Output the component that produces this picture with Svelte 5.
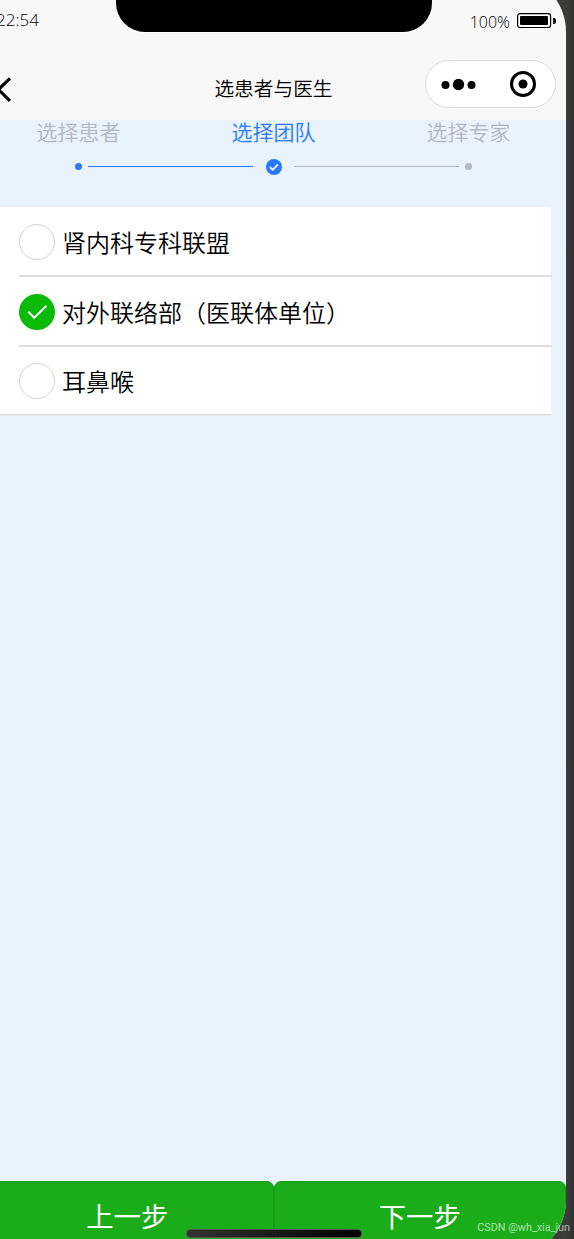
<script>
	const steps = ['选择患者', '选择团队', '选择专家'];
	const active = 1;

	const teams = [
	  { id: 1, name: '肾内科专科联盟' },
	  { id: 2, name: '对外联络部（医联体单位）' },
	  { id: 3, name: '耳鼻喉' },
	];
	let selected = $state(2);
</script>

<main>
	<div class="phone">
		<header>
			<div class="notch"></div>
			<div class="status">
				<span class="time">22:54</span>
				<span class="power">100%</span>
				<svg class="battery" width="40" height="16" viewBox="0 0 40 16">
					<rect x="0.6" y="0.7" width="33" height="13.8" rx="2.5" fill="#fff" stroke="#000" stroke-width="1.2" />
					<rect x="3" y="3" width="28" height="9" rx="1" />
					<path d="M36 5h1q2 0 2 3t-2 3h-1z" />
				</svg>
			</div>
			<div class="navbar">
				<svg class="back" width="16" height="28" viewBox="0 0 16 28">
					<path d="M13 2.4 1.4 13.6l11.6 11.2" fill="none" stroke="#000" stroke-width="3.2" />
				</svg>
				<h1>选患者与医生</h1>
				<div class="capsule">
					<svg width="129" height="46" viewBox="0 0 129 46">
						<circle cx="19.5" cy="24" r="4" />
						<circle cx="32.5" cy="23.5" r="5.7" />
						<circle cx="45.5" cy="24" r="4" />
						<circle cx="97" cy="23" r="11.5" fill="none" stroke="#000" stroke-width="3" />
						<circle cx="97" cy="23" r="4.5" />
					</svg>
				</div>
			</div>
		</header>

		<div class="steps">
			{#each steps as step, i}
				<div class="step" class:current={i === active} class:done={i < active}>
					<span>{step}</span>
					<div class="track">
						<i class:hidden={i === 0} class:blue={i <= active}></i>
						{#if i === active}
							<svg width="16" height="16" viewBox="0 0 16 16">
								<circle cx="8" cy="8" r="8" fill="#2979ff" />
								<path d="M3.9 8.2 6.7 10.8 12 5.3" fill="none" stroke="#fff" stroke-width="1.7" />
							</svg>
						{:else}
							<b></b>
						{/if}
						<i class:hidden={i === steps.length - 1} class:blue={i < active}></i>
					</div>
				</div>
			{/each}
		</div>

		<div class="list">
			{#each teams as team (team.id)}
				<label>
					<input type="radio" name="team" value={team.id} bind:group={selected} />
					<svg width="36" height="36" viewBox="0 0 36 36">
						{#if selected === team.id}
							<circle cx="18" cy="18" r="18" fill="#09bb07" />
							<path d="M9.3 17.8 15.2 23.8 27.5 11.7" fill="none" stroke="#fff" stroke-width="2" />
						{:else}
							<circle cx="18" cy="18" r="17.5" fill="#fff" stroke="#d1d1d1" />
						{/if}
					</svg>
					<span>{team.name}</span>
				</label>
			{/each}
		</div>

		<footer>
			<button>上一步</button>
			<button>下一步</button>
			<div class="home"></div>
		</footer>
	</div>
	<div class="mark">CSDN @wh_xia_jun</div>
</main>

<style>
	:global(body) {
	  margin: 0;
	  overflow: hidden;
	}

	main {
	  position: relative;
	  width: 574px;
	  height: 1239px;
	  overflow: hidden;
	  background: linear-gradient(90deg, #3c3c3a 566px, #303030 574px);
	  font-family: "Noto Sans", "Noto Sans CJK SC", sans-serif;
	  font-weight: 300;
	}

	/* the device is a bit larger than the window, its edges are cut off */
	.phone {
	  display: flex;
	  flex-direction: column;
	  box-sizing: border-box;
	  width: 585px;
	  height: 1284px;
	  margin: -26px 0 0 -19px;
	  padding-top: 26px;
	  border-radius: 58px;
	  overflow: hidden;
	  background: linear-gradient(#f8f8f8 146px, #e8f3fe 146px);
	}

	header {
	  position: relative;
	  height: 120px;
	}

	.notch {
	  position: absolute;
	  top: 0;
	  left: 135px;
	  width: 316px;
	  height: 32px;
	  border-radius: 0 0 29px 29px;
	  background: #000;
	  box-shadow: 0 1px 0 #fff;
	}

	.status {
	  display: flex;
	  align-items: center;
	  height: 41px;
	  padding: 0 9px 0 15px;
	  font-family: "Open Sans", "Noto Sans", sans-serif;
	  font-size: 16px;
	}

	.time {
	  flex: 1;
	  padding-bottom: 2px;
	  font-size: 17px;
	}

	.power {
	  margin-right: 7px;
	  padding-top: 3px;
	}

	.navbar {
	  display: grid;
	  grid-template-columns: 1fr auto 1fr;
	  align-items: center;
	  height: 79px;
	  padding: 0 10px 0 16px;
	  box-sizing: border-box;
	}

	.back {
	  margin-top: 18px;
	}

	h1 {
	  margin: 16px 0 0 -6px;
	  font-size: 19.7px;
	  font-weight: 350;
	  line-height: 28px;
	}

	.capsule {
	  justify-self: end;
	  width: 129px;
	  height: 46px;
	  margin-top: 7px;
	  border: 1px solid #dcdcdc;
	  border-radius: 24px;
	  background: #fff;
	}

	.capsule svg {
	  display: block;
	}

	.steps {
	  display: flex;
	  height: 87px;
	}

	.step {
	  flex: 1;
	  color: #b3b8c0;
	  font-size: 21px;
	  font-weight: 350;
	  line-height: 24px;
	  text-align: center;
	}

	.step > span {
	  display: block;
	}

	.current {
	  color: #2979ff;
	}

	.track {
	  display: flex;
	  align-items: center;
	  justify-content: space-between;
	  height: 16px;
	  margin-top: 15px;
	}

	.track i {
	  width: 77px;
	  height: 1px;
	  margin-bottom: 1px;
	  background: #b3b8c0;
	}

	.track b {
	  width: 7px;
	  height: 7px;
	  margin-bottom: 1px;
	  border-radius: 50%;
	  background: #b3b8c0;
	}

	.step:not(.current) .track i {
	  width: 88px;
	}

	.track i.blue,
	.done .track b {
	  background: #2979ff;
	}

	.track i.hidden {
	  visibility: hidden;
	}

	.list {
	  width: 570px;
	  height: 207px;
	  background: #fff;
	  border-bottom: 1px solid #d9d9d9;
	  box-shadow: 0 1px 0 #e6e9ec;
	}

	label {
	  display: flex;
	  align-items: center;
	  gap: 7px;
	  box-sizing: border-box;
	  width: 533px;
	  height: 70px;
	  margin-left: 38px;
	  padding-top: 2px;
	  border-bottom: 2px solid #dedede;
	  font-size: 24px;
	  font-weight: 350;
	  line-height: 36px;
	}

	label:last-child {
	  height: 67px;
	  padding-top: 1px;
	  border-bottom: none;
	}

	label span {
	  padding-top: 2px;
	}

	input {
	  display: none;
	}

	footer {
	  position: relative;
	  display: flex;
	  height: 77px;
	  margin-top: auto;
	}

	button {
	  flex: 1;
	  padding: 0 0 9px;
	  border: 1px solid #179b16;
	  border-radius: 7px;
	  background: #1aad19;
	  color: #fff;
	  font: 400 27.3px "Noto Sans CJK SC", sans-serif;
	}

	.home {
	  position: absolute;
	  top: 48px;
	  left: 205px;
	  box-sizing: border-box;
	  width: 176px;
	  height: 9px;
	  border: 1px solid #555;
	  border-radius: 4px;
	  background: linear-gradient(90deg, #333, #000);
	}

	.mark {
	  position: absolute;
	  right: 4px;
	  bottom: 4px;
	  color: rgba(255, 255, 255, 0.65);
	  font: 10.8px/14px Roboto, sans-serif;
	}
</style>
